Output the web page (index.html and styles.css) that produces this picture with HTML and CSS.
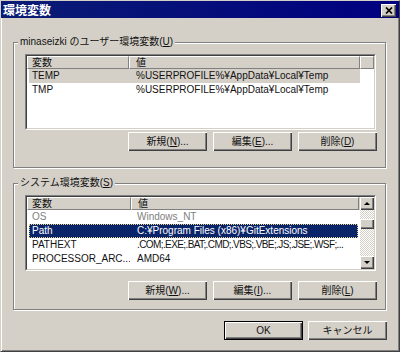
FILE: index.html
```html
<!DOCTYPE html>
<html lang="ja">
<head>
<meta charset="utf-8">
<title>環境変数</title>
<link rel="stylesheet" href="styles.css">
</head>
<body>
<div class="window">
	<!-- タイトルバー -->
	<div class="titlebar">
		<span class="title">環境変数</span>
		<button class="close"><svg width="8" height="7" viewBox="0 0 8 7"><path d="M1 0.5l6 6M7 0.5l-6 6" stroke="#000" stroke-width="1.7"/></svg></button>
	</div>
	<div class="content">
		<!-- ユーザー環境変数 -->
		<div class="group group-user">
			<div class="group-title">minaseizki のユーザー環境変数(<u>U</u>)</div>
			<div class="list">
				<div class="list-inner">
					<div class="rows">
						<div class="list-head"><span class="col1">変数</span><span class="col2">値</span><span class="rest"></span></div>
						<div class="row selected"><span class="col1">TEMP</span><span class="col2">%USERPROFILE%¥AppData¥Local¥Temp</span></div>
						<div class="row"><span class="col1">TMP</span><span class="col2">%USERPROFILE%¥AppData¥Local¥Temp</span></div>
					</div>
				</div>
			</div>
			<div class="btn-row">
				<button class="btn">新規(<u>N</u>)...</button>
				<button class="btn">編集(<u>E</u>)...</button>
				<button class="btn">削除(<u>D</u>)</button>
			</div>
		</div>
		<!-- システム環境変数 -->
		<div class="group group-sys">
			<div class="group-title">システム環境変数(<u>S</u>)</div>
			<div class="list">
				<div class="list-inner">
					<div class="rows">
						<div class="list-head"><span class="col1">変数</span><span class="col2">値</span></div>
						<div class="row dim"><span class="col1">OS</span><span class="col2">Windows_NT</span></div>
						<div class="row focused"><span class="col1">Path</span><span class="col2">C:¥Program Files (x86)¥GitExtensions</span></div>
						<div class="row"><span class="col1">PATHEXT</span><span class="col2 tight">.COM;.EXE;.BAT;.CMD;.VBS;.VBE;.JS;.JSE;.WSF;...</span></div>
						<div class="row"><span class="col1">PROCESSOR_ARC...</span><span class="col2">AMD64</span></div>
					</div>
					<div class="scrollbar">
						<div class="sb-btn"><i class="arrow-up"></i></div>
						<div class="sb-track"><div class="sb-thumb"></div></div>
						<div class="sb-btn"><i class="arrow-down"></i></div>
					</div>
				</div>
			</div>
			<div class="btn-row">
				<button class="btn">新規(<u>W</u>)...</button>
				<button class="btn">編集(<u>I</u>)...</button>
				<button class="btn">削除(<u>L</u>)</button>
			</div>
		</div>
		<div class="dialog-btns">
			<button class="btn default">OK</button>
			<button class="btn">キャンセル</button>
		</div>
	</div>
</div>
</body>
</html>
```

FILE: styles.css
```css
html, body {
	margin: 0;
	height: 100%;
}
body {
	background: #d4d0c8;
	font: 10px "Liberation Sans", "Noto Sans CJK JP", sans-serif;
	color: #111;
}
.window {
	width: 400px;
	height: 352px;
	box-sizing: border-box;
	border: 1px solid;
	border-color: #d4d0c8 #404040 #404040 #d4d0c8;
	box-shadow: inset 1px 1px #fff, inset -1px -1px #808080;
	display: flex;
	flex-direction: column;
}
.titlebar {
	height: 17px;
	display: flex;
	justify-content: space-between;
	align-items: flex-start;
	padding: 0 3px 0 2px;
	background: linear-gradient(to right, #0a1c74, #000080);
}
.title {
	color: #fff;
	font: bold 12px "Noto Sans CJK JP", sans-serif;
	line-height: 17px;
}
.close {
	margin-top: 3px;
	width: 15px;
	height: 13px;
	padding: 0;
	border: 0;
	background: #d4d0c8;
	box-shadow: inset 1px 1px #fff, inset -1px -1px #404040, inset -2px -2px #808080;
	display: flex;
	align-items: center;
	justify-content: center;
}
.content {
	padding: 0 12px;
}
/* グループボックス */
.group {
	width: 373px;
	box-sizing: border-box;
	border: 1px solid #808080;
	box-shadow: 1px 1px #fff, inset 1px 1px #fff;
	padding: 0 8px 16px 11px;
	display: flex;
	flex-direction: column;
}
.group-user {
	margin-top: 24px;
}
.group-sys {
	margin-top: 15px;
	padding-bottom: 9px;
}
.group-title {
	align-self: flex-start;
	margin: -7px 0 0 -7px;
	padding: 0 2px;
	line-height: 12px;
	background: #d4d0c8;
}
u {
	text-underline-offset: 1px;
}
/* リストビュー */
.list {
	margin-top: 6px;
	width: 351px;
	height: 76px;
	box-sizing: border-box;
	border: 1px solid;
	border-color: #808080 #fff #fff #808080;
}
.list-inner {
	height: 100%;
	box-sizing: border-box;
	border: 1px solid;
	border-color: #404040 #d4d0c8 #d4d0c8 #404040;
	background: #fff;
	overflow: hidden;
	display: flex;
}
.rows {
	flex: 1;
	min-width: 0;
}
.list-head {
	display: flex;
	height: 13px;
	background: #d4d0c8;
}
.list-head span {
	flex: none;
	box-sizing: border-box;
	border: 1px solid;
	border-color: #fff #808080 #808080 #fff;
	line-height: 11px;
	padding-left: 4px;
	white-space: nowrap;
}
.list-head .col1 {
	width: 102px;
}
.list-head .col2 {
	width: 231px;
	padding-left: 6px;
}
.list-head .rest {
	flex: 1;
}
.row {
	display: flex;
	height: 14px;
	line-height: 14px;
	margin-left: 2px;
	width: 331px;
	box-sizing: border-box;
	white-space: nowrap;
}
.row .col1 {
	flex: none;
	width: 100px;
	padding-left: 3px;
	box-sizing: border-box;
	overflow: hidden;
}
.row .col2 {
	flex: 1;
	min-width: 0;
	overflow: hidden;
	padding-left: 7px;
}
.row .tight {
	letter-spacing: -0.6px;
}
.row.selected {
	background: #d4d0c8;
}
.row.dim {
	color: #808080;
}
.row.focused {
	background: #0a246a;
	color: #fff;
	outline: 1px dotted #e8d48a;
	outline-offset: -1px;
}
.group-sys .list-head .col1 {
	width: 104px;
}
.group-sys .list-head .col2 {
	width: 228px;
}
.group-sys .row {
	width: 329px;
}
.group-sys .row .col1 {
	width: 101px;
}
/* スクロールバー */
.scrollbar {
	flex: none;
	width: 14px;
	display: flex;
	flex-direction: column;
	background: repeating-conic-gradient(#d4d0c8 0 25%, #fff 0 50%) 0 0 / 2px 2px;
}
.sb-btn, .sb-thumb {
	background: #d4d0c8;
	box-shadow: inset 1px 1px #fff, inset -1px -1px #404040, inset -2px -2px #808080;
}
.sb-btn {
	height: 13px;
	display: flex;
	align-items: center;
	justify-content: center;
}
.sb-track {
	flex: 1;
}
.sb-thumb {
	margin-top: 9px;
	height: 10px;
}
.arrow-up, .arrow-down {
	width: 0;
	height: 0;
	border-left: 3px solid transparent;
	border-right: 3px solid transparent;
}
.arrow-up {
	border-bottom: 3px solid #000;
}
.arrow-down {
	border-top: 3px solid #000;
}
/* ボタン */
.btn-row {
	display: flex;
	justify-content: flex-end;
	gap: 6px;
	margin-top: 2px;
}
.group-sys .btn-row {
	margin-top: 10px;
}
.btn {
	width: 79px;
	height: 19px;
	padding: 0;
	border: 0;
	background: #d4d0c8;
	box-shadow: inset 1px 1px #fff, inset -1px -1px #404040, inset -2px -2px #808080;
	font: 10px "Liberation Sans", "Noto Sans CJK JP", sans-serif;
	line-height: 19px;
	color: #111;
}
.btn.default {
	border: 1px solid #000;
	line-height: 17px;
}
.dialog-btns {
	width: 374px;
	display: flex;
	justify-content: flex-end;
	gap: 5px;
	margin-top: 11px;
}
```
